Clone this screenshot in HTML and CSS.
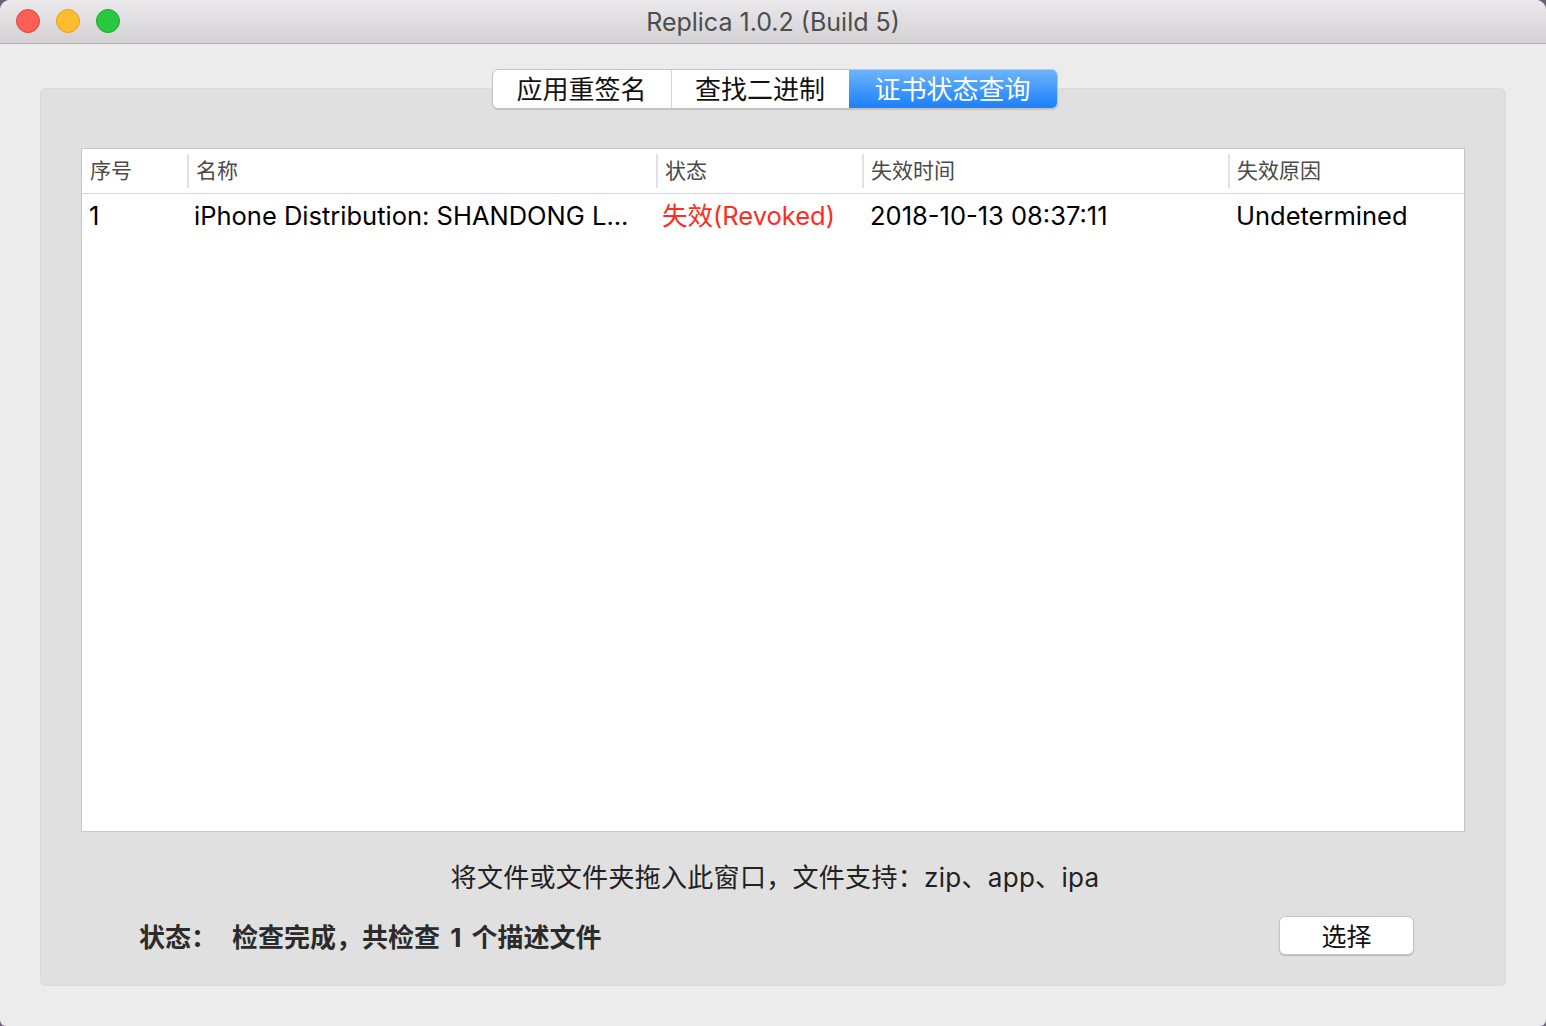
FILE: index.html
```html
<!DOCTYPE html>
<html lang="zh-CN">
<head>
<meta charset="utf-8">
<title>Replica 1.0.2 (Build 5)</title>
<link rel="stylesheet" href="styles.css">
</head>
<body>
<div class="window">
  <div class="titlebar">
    <div class="lights">
      <span class="light red"></span>
      <span class="light yellow"></span>
      <span class="light green"></span>
    </div>
    <div class="title">Replica 1.0.2 (Build 5)</div>
    <div class="spacer"></div>
  </div>
  <div class="content">
    <div class="groupbox">
      <div class="tabs">
        <div class="tab tab1">应用重签名</div>
        <div class="tab tab2">查找二进制</div>
        <div class="tab tab3 active">证书状态查询</div>
      </div>
      <div class="table">
        <div class="thead">
          <div class="th first">序号</div>
          <div class="th">名称</div>
          <div class="th">状态</div>
          <div class="th">失效时间</div>
          <div class="th">失效原因</div>
        </div>
        <div class="tr">
          <div class="td c1">1</div>
          <div class="td c2">iPhone Distribution: SHANDONG L...</div>
          <div class="td c3 revoked">失效(Revoked)</div>
          <div class="td c4">2018-10-13 08:37:11</div>
          <div class="td c5">Undetermined</div>
        </div>
      </div>
      <div class="hint">将文件或文件夹拖入此窗口，文件支持：zip、app、ipa</div>
      <div class="statusrow">
        <div class="status"><span class="label">状态：</span><span class="msg">检查完成，共检查 1 个描述文件</span></div>
        <button class="btn">选择</button>
      </div>
    </div>
  </div>
</div>
</body>
</html>
```

FILE: styles.css
```css
* { box-sizing: border-box; }
html, body { margin: 0; padding: 0; }
body {
  background: #6d5f78;
  font-family: "Inter", "Noto Sans CJK SC", sans-serif;
  width: 1546px;
  height: 1026px;
  overflow: hidden;
}
.window {
  width: 1546px;
  height: 1026px;
  background: #ececec;
  border-radius: 10px 10px 6px 6px;
  overflow: hidden;
  display: flex;
  flex-direction: column;
}
.titlebar {
  height: 44px;
  flex: none;
  background: linear-gradient(#ebe9eb, #d3d1d3);
  border-bottom: 1px solid #b1b1b1;
  display: grid;
  grid-template-columns: 1fr auto 1fr;
  align-items: center;
}
.lights {
  display: flex;
  gap: 16px;
  padding-left: 16px;
  padding-bottom: 1px;
}
.light {
  width: 24px;
  height: 24px;
  border-radius: 50%;
  display: block;
}
.red { background: #fd5f57; border: 1px solid #e0443e; }
.yellow { background: #febc2e; border: 1px solid #dea123; }
.green { background: #2ac840; border: 1px solid #1aab29; }
.title {
  font-family: "Inter", "Noto Sans CJK SC", sans-serif;
  font-size: 25px;
  color: #4d4d4d;
  line-height: 30px;
  padding-top: 1px;
}
.content {
  flex: 1;
  padding: 44px 40px 40px 40px;
  display: flex;
}
.groupbox {
  flex: 1;
  background: #e0e0e0;
  border: 1px solid #d9d9d9;
  border-radius: 6px;
  display: flex;
  flex-direction: column;
  align-items: stretch;
  padding: 0 40px;
}
.tabs {
  align-self: center;
  margin-top: -20px;
  margin-left: 3px;
  display: flex;
  height: 40px;
  border: 1px solid #c4c4c4;
  border-radius: 6px;
  background: #fff;
  box-shadow: 0 1px 1px rgba(0,0,0,0.15);
  overflow: hidden;
  font-family: "Noto Sans CJK SC", sans-serif;
  font-size: 26px;
  color: #111;
}
.tab {
  display: flex;
  align-items: center;
  justify-content: center;
  line-height: 38px;
  padding-bottom: 2px;
}
.tab1 { width: 179px; border-right: 1px solid #d6d6d6; }
.tab2 { width: 177px; }
.tab3 { width: 208px; }
.tab.active {
  background: linear-gradient(#6db4fb, #1a7ffb);
  color: #fff;
}
.table {
  margin-top: 39px;
  height: 684px;
  background: #fff;
  border: 1px solid #c6c6c6;
}
.thead, .tr {
  display: grid;
  grid-template-columns: 105px 469px 206px 366px 1fr;
}
.thead {
  height: 45px;
  border-bottom: 1px solid #d6d6d6;
  align-items: center;
  font-family: "Noto Sans CJK SC", sans-serif;
  font-size: 21px;
  color: #4a4a4a;
}
.th {
  height: 34px;
  display: flex;
  align-items: center;
  border-left: 2px solid #e2e2e2;
  padding-left: 7px;
  line-height: 34px;
  padding-bottom: 5px;
}
.th.first { border-left: none; padding-left: 8px; }
.tr {
  height: 44px;
  align-items: center;
  font-size: 25.5px;
  color: #000;
}
.td {
  line-height: 44px;
  padding-left: 7px;
  white-space: nowrap;
  padding-bottom: 2px;
}
.td.c1 { padding-left: 7px; }
.td.c2 { padding-left: 7px; }
.td.c3 { padding-left: 6px; }
.td.c4 { padding-left: 8px; }
.td.c5 { padding-left: 8px; }
.revoked { color: #fc2d22; }
.hint {
  margin-top: 31px;
  text-align: center;
  font-size: 26px;
  line-height: 30px;
  color: #222;
  padding-left: 4px;
  letter-spacing: 0.3px;
}
.statusrow {
  margin-top: 20px;
  display: flex;
  align-items: center;
  justify-content: space-between;
  padding-left: 58px;
  padding-right: 51px;
}
.status {
  font-size: 26px;
  font-weight: 700;
  color: #2b2b2b;
  line-height: 38px;
  padding-top: 6px;
  word-spacing: 4px;
}
.status .label { display: inline-block; width: 93px; }
.btn {
  width: 135px;
  height: 39px;
  background: #fff;
  border: 1px solid #c3c3c3;
  border-radius: 6px;
  box-shadow: 0 1px 1px rgba(0,0,0,0.18);
  font-family: "Noto Sans CJK SC", sans-serif;
  font-size: 25px;
  color: #111;
  padding: 0 0 2px 0;
  line-height: 36px;
}
```
